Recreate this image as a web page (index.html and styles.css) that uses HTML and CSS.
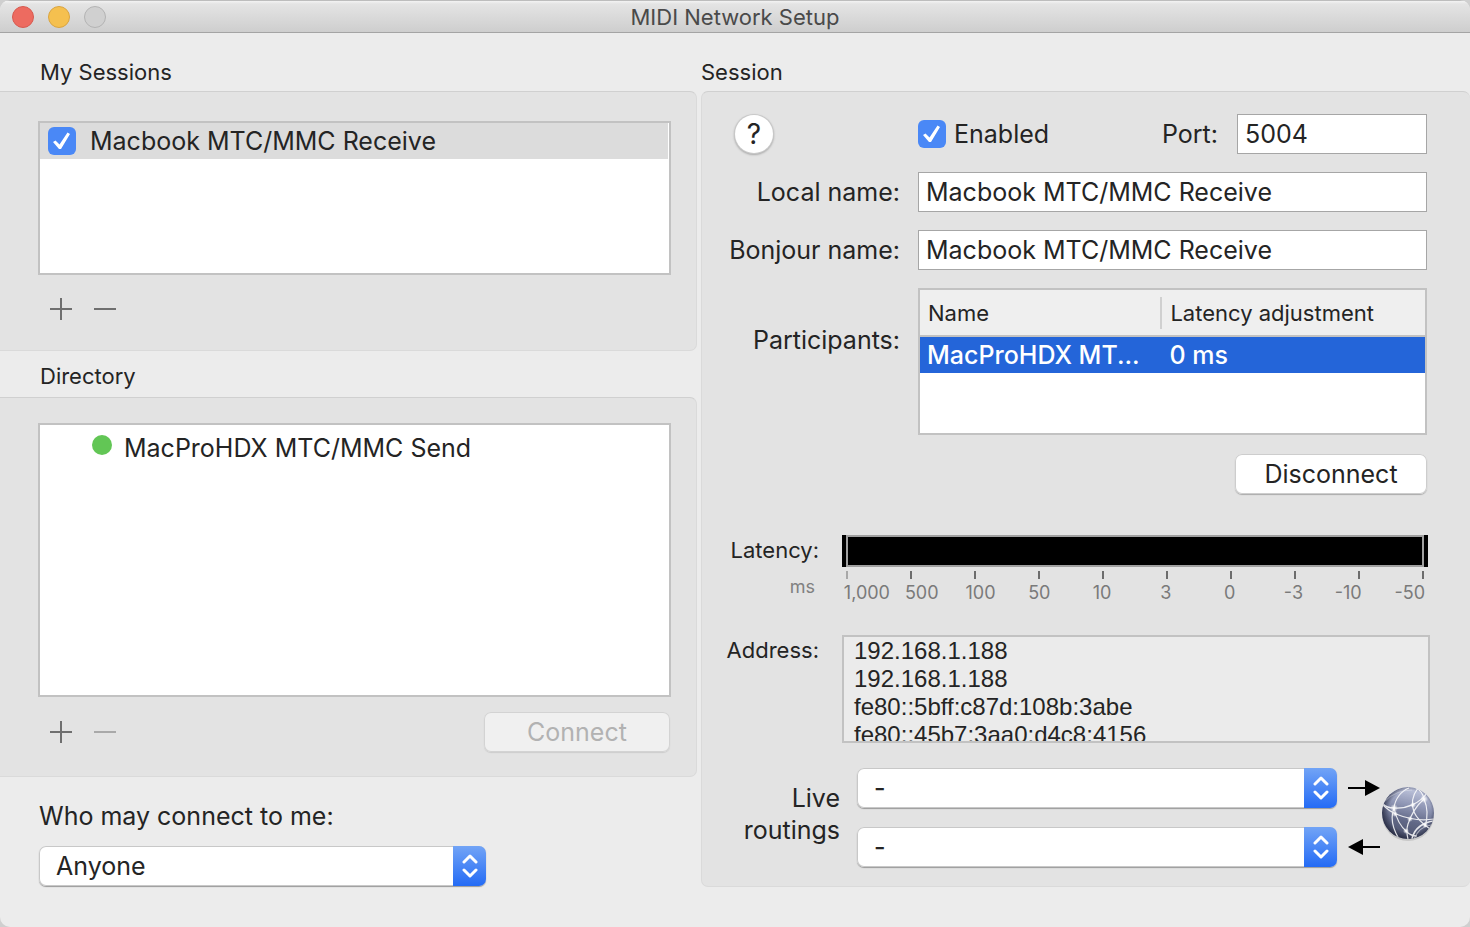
FILE: index.html
```html
<!DOCTYPE html>
<html lang="en">
<head>
<meta charset="utf-8">
<title>MIDI Network Setup</title>
<link rel="stylesheet" href="styles.css">
</head>
<body>
<div class="window">
  <header class="titlebar">
    <div class="lights">
      <button class="light light-close" aria-label="Close"></button>
      <button class="light light-minimize" aria-label="Minimize"></button>
      <button class="light light-zoom" aria-label="Zoom" disabled></button>
    </div>
    <h1 class="title">MIDI Network Setup</h1>
  </header>

  <main class="columns">
    <div class="side">
      <h2 class="heading">My Sessions</h2>
      <section class="box box-left box-sessions">
        <div class="list list-sessions">
          <label class="session-row">
            <input class="check" type="checkbox" checked>
            <span>Macbook MTC/MMC Receive</span>
          </label>
        </div>
        <div class="tools">
          <button class="tool" aria-label="Add session"><svg width="22" height="22" viewBox="0 0 22 22"><path d="M0 11H22M11 0V22" stroke="currentColor" stroke-width="2"/></svg></button>
          <button class="tool" aria-label="Remove session"><svg width="22" height="22" viewBox="0 0 22 22"><path d="M0 11H22" stroke="currentColor" stroke-width="2"/></svg></button>
        </div>
      </section>

      <h2 class="heading heading-directory">Directory</h2>
      <section class="box box-left box-directory">
        <div class="list list-directory">
          <div class="directory-row"><span class="dot"></span><span>MacProHDX MTC/MMC Send</span></div>
        </div>
        <div class="tools">
          <button class="tool" aria-label="Add contact"><svg width="22" height="22" viewBox="0 0 22 22"><path d="M0 11H22M11 0V22" stroke="currentColor" stroke-width="2"/></svg></button>
          <button class="tool" aria-label="Remove contact" disabled><svg width="22" height="22" viewBox="0 0 22 22"><path d="M0 11H22" stroke="currentColor" stroke-width="2"/></svg></button>
          <button class="push push-connect" disabled>Connect</button>
        </div>
      </section>

      <div class="access">
        <label for="who">Who may connect to me:</label>
        <div class="popup popup-who">
          <select id="who"><option>Anyone</option></select>
          <span class="stepper"><svg width="16" height="26" viewBox="0 0 16 26"><path d="M2 9L8 3L14 9M2 17L8 23L14 17"/></svg></span>
        </div>
      </div>
    </div>

    <div class="detail">
      <h2 class="heading heading-session">Session</h2>
      <section class="box box-session">
        <div class="form">
          <button class="help" aria-label="Help">?</button>
          <div class="enable-row">
            <label class="enable"><input class="check" type="checkbox" checked><span>Enabled</span></label>
            <label for="port">Port:</label>
            <input class="field field-port" id="port" type="text" value="5004">
          </div>
          <label class="form-label" for="local">Local name:</label>
          <input class="field" id="local" type="text" value="Macbook MTC/MMC Receive">
          <label class="form-label" for="bonjour">Bonjour name:</label>
          <input class="field" id="bonjour" type="text" value="Macbook MTC/MMC Receive">
          <span class="form-label label-participants" id="participants">Participants:</span>
          <div class="participants">
            <table aria-labelledby="participants">
              <thead><tr><th class="col-name"><span>Name</span></th><th>Latency adjustment</th></tr></thead>
              <tbody><tr><td>MacProHDX MT...</td><td>0 ms</td></tr></tbody>
            </table>
          </div>
        </div>
        <button class="push push-disconnect">Disconnect</button>

        <div class="status">
          <div class="status-label">Latency:<span class="unit">ms</span></div>
          <div class="latency">
            <div class="meter"></div>
            <div class="ticks"><i></i><i></i><i></i><i></i><i></i><i></i><i></i><i></i><i></i><i></i></div>
            <div class="scale"><span>1,000</span><span>500</span><span>100</span><span>50</span><span>10</span><span>3</span><span>0</span><span>-3</span><span>-10</span><span>-50</span></div>
          </div>
          <label class="status-label" for="address">Address:</label>
          <textarea class="address" id="address" readonly>192.168.1.188
192.168.1.188
fe80::5bff:c87d:108b:3abe
fe80::45b7:3aa0:d4c8:4156</textarea>
        </div>

        <div class="routing">
          <div class="routing-label">Live<br>routings</div>
          <div class="routing-popups">
            <div class="popup">
              <select aria-label="Live routing to network"><option>-</option></select>
              <span class="stepper"><svg width="16" height="26" viewBox="0 0 16 26"><path d="M2 9L8 3L14 9M2 17L8 23L14 17"/></svg></span>
            </div>
            <div class="popup">
              <select aria-label="Live routing from network"><option>-</option></select>
              <span class="stepper"><svg width="16" height="26" viewBox="0 0 16 26"><path d="M2 9L8 3L14 9M2 17L8 23L14 17"/></svg></span>
            </div>
          </div>
          <div class="arrows">
            <svg width="32" height="16" viewBox="0 0 32 16"><path d="M0 8H18" stroke="#000" stroke-width="2"/><path d="M17 0L32 8L17 16Z"/></svg>
            <svg width="32" height="16" viewBox="0 0 32 16"><path d="M14 8H32" stroke="#000" stroke-width="2"/><path d="M15 0L0 8L15 16Z"/></svg>
          </div>
          <svg class="globe" width="54" height="56" viewBox="0 0 54 56">
            <defs>
              <linearGradient id="sphere" x1="0.6" y1="0" x2="0.4" y2="1">
                <stop offset="0" stop-color="#c3c9e0"/><stop offset="0.35" stop-color="#8f96b4"/><stop offset="0.65" stop-color="#626987"/><stop offset="1" stop-color="#4c526c"/>
              </linearGradient>
              <radialGradient id="rim" cx="0.54" cy="0.47" r="0.54">
                <stop offset="0.75" stop-color="#20243a" stop-opacity="0"/><stop offset="1" stop-color="#20243a" stop-opacity="0.75"/>
              </radialGradient>
              <radialGradient id="spark"><stop offset="0" stop-color="#fff"/><stop offset="0.35" stop-color="#fff" stop-opacity="0.7"/><stop offset="1" stop-color="#fff" stop-opacity="0"/></radialGradient>
              <clipPath id="disc"><circle cx="27" cy="27" r="26"/></clipPath>
            </defs>
            <circle cx="27" cy="29" r="26" fill="#000" opacity="0.12"/>
            <circle cx="27" cy="27" r="26" fill="url(#sphere)"/>
            <g clip-path="url(#disc)">
              <circle cx="27" cy="27" r="26" fill="url(#rim)"/>
              <g fill="none" stroke="#fff" stroke-width="1.2" opacity="0.85">
                <path d="M2 18C5 21 9 22 13 22C26 23 39 17 46 7"/>
                <path d="M28 2C20 5 14 13 13 22C9 32 12 43 18 53"/>
                <path d="M2 19C7 24 10 26 15 28C27 33 40 35 53 33"/>
                <path d="M35 2C39 4 42 8 43 13C47 22 47 31 44 41"/>
                <path d="M37 2C31 10 30 18 33 26C36 33 42 38 49 43"/>
                <path d="M43 13C35 20 30 29 27 38C25 44 26 49 27 53"/>
                <path d="M13 22C15 32 19 40 26 46C29 49 33 50 36 50"/>
                <path d="M53 35C43 36 33 42 31 53" stroke-width="1.6"/>
                <path d="M50 39C42 40 36 46 33 53" opacity="0.6"/>
                <path d="M4 15C11 8 20 4 31 4" opacity="0.35"/>
              </g>
              <g fill="url(#spark)"><circle cx="13" cy="22" r="4"/><circle cx="14" cy="28" r="3"/><circle cx="43" cy="13" r="4"/><circle cx="32" cy="19" r="3"/><circle cx="29" cy="33" r="3"/><circle cx="25" cy="45" r="3"/><circle cx="44" cy="39" r="3"/></g>
            </g>
          </svg>
        </div>
      </section>
    </div>
  </main>
</div>
</body>
</html>
```
FILE: styles.css
```css
:root {
  --large: 25px;
  --small: 22px;
  --ink: #242424;
  --edge: #c2c2c2;
}

* {
  box-sizing: border-box;
}

html {
  background: #cfcfcf;
}

body {
  margin: 0;
  font-family: Inter, "Liberation Sans", sans-serif;
  font-size: var(--large);
  line-height: 32px;
  color: var(--ink);
}

button,
input,
select,
textarea {
  margin: 0;
  padding: 0;
  border: 0;
  font: inherit;
  color: inherit;
}

.window {
  min-height: 100vh;
  background: #ececec;
  border-radius: 10px;
  overflow: hidden;
}

.titlebar {
  display: grid;
  grid-template-columns: 1fr auto 1fr;
  align-items: center;
  height: 33px;
  padding: 0 12px;
  background: linear-gradient(#f3f3f3, #e4e4e4 3px, #cecece);
  border-top: 1px solid #bdbdbd;
  border-bottom: 1px solid #a4a4a4;
}

.lights {
  display: flex;
  gap: 14px;
}

.light {
  width: 22px;
  height: 22px;
  border: 1px solid;
  border-radius: 50%;
}

.light-close {
  background: #ed6b60;
  border-color: #d65a50;
}

.light-minimize {
  background: #f5c04f;
  border-color: #d9a441;
}

.light-zoom {
  background: #d0d0d0;
  border-color: #b3b3b3;
}

.title {
  margin: 0;
  font-size: var(--small);
  font-weight: 400;
  line-height: 28px;
  color: #4a4a4a;
}

.columns {
  display: grid;
  grid-template-columns: minmax(0, 697fr) minmax(0, 769fr);
  gap: 4px;
}

.heading {
  margin: 0;
  padding: 25px 40px 5px;
  font-size: var(--small);
  font-weight: 400;
  line-height: 28px;
}

.heading-directory {
  padding-top: 11px;
  padding-bottom: 7px;
}

.heading-session {
  padding-left: 0;
}

.box {
  background: #e3e3e3;
  border: 1px solid #dadada;
  border-top-color: #d0d0d0;
  border-radius: 7px;
}

.box-left {
  padding-left: 38px;
  padding-right: 25px;
  border-left: 0;
  border-top-left-radius: 0;
  border-bottom-left-radius: 0;
}

.box-sessions {
  padding-top: 29px;
  padding-bottom: 21px;
}

.box-directory {
  padding-top: 25px;
  padding-bottom: 24px;
}

.list {
  background: #fff;
  border: 2px solid var(--edge);
}

.list-sessions {
  min-height: 154px;
}

.list-directory {
  min-height: 274px;
}

.session-row {
  display: flex;
  align-items: center;
  gap: 14px;
  min-height: 36px;
  margin-right: 1px;
  padding-left: 8px;
  background: #dcdcdc;
}

.directory-row {
  display: flex;
  align-items: center;
  gap: 12px;
  padding: 7px 0 0 52px;
}

.dot {
  width: 20px;
  height: 20px;
  margin-bottom: 6px;
  border-radius: 50%;
  background: #62c655;
}

.check {
  appearance: none;
  flex: none;
  width: 28px;
  height: 28px;
  border-radius: 6px;
  background: #4a88f6;
  display: grid;
  place-items: center;
}

.check:checked::before {
  content: "";
  width: 18px;
  height: 18px;
  background: #fff;
  clip-path: path("M0 10L2.5 8.5L6.5 12.5L14.5 0.5L17 2L8 17L6 17Z");
}

.tools {
  display: flex;
  align-items: center;
  gap: 22px;
  min-height: 40px;
  margin-top: 14px;
  padding-left: 12px;
}

.box-directory .tools {
  margin-top: 15px;
}

.tool {
  display: grid;
  background: none;
  color: #6f6f6f;
}

.tool:disabled {
  color: #a9a9a9;
}

.push {
  height: 40px;
  border-radius: 7px;
  background: #fff;
  box-shadow: inset 0 0 0 1px #cdcdcd, 0 1px 1px #aaa;
}

.push-connect {
  width: 186px;
  margin-left: auto;
  margin-right: 1px;
  background: #f0f0f0;
  color: #b2b2b2;
  box-shadow: inset 0 0 0 1px #d3d3d3, 0 1px 1px #ccc;
}

.push-disconnect {
  display: block;
  width: 192px;
  margin: 19px 43px 0 auto;
}

.access {
  display: grid;
  gap: 14px;
  padding: 23px 0 40px 39px;
}

.popup {
  position: relative;
}

.popup-who {
  width: 447px;
}

.popup select {
  display: block;
  appearance: none;
  width: 100%;
  height: 40px;
  padding: 0 40px 0 17px;
  border-radius: 7px;
  background: #fff;
  box-shadow: inset 0 0 0 1px #c8c8c8, 0 1px 1px #999;
}

.stepper {
  position: absolute;
  top: 0;
  right: 0;
  bottom: 0;
  width: 33px;
  display: grid;
  place-items: center;
  border-radius: 0 7px 7px 0;
  background: linear-gradient(#72a4f6, #246bf5);
  pointer-events: none;
}

.stepper path {
  fill: none;
  stroke: #fff;
  stroke-width: 3px;
  stroke-linecap: round;
  stroke-linejoin: round;
}

.box-session {
  padding-top: 22px;
  padding-bottom: 19px;
  border-right: 0;
}

.form {
  display: grid;
  grid-template-columns: 174px minmax(0, 1fr);
  gap: 18px;
  align-items: center;
  padding: 0 43px 0 24px;
}

.form-label {
  text-align: right;
  white-space: nowrap;
}

.label-participants {
  align-self: start;
  padding-top: 36px;
}

.help {
  width: 38px;
  height: 38px;
  margin-left: 9px;
  border-radius: 50%;
  background: #fff;
  box-shadow: 0 0 0 1px #c9c9c9, 0 1px 2px 1px #aaa;
  font-size: 28px;
}

.enable-row {
  display: flex;
  align-items: center;
}

.enable {
  display: flex;
  align-items: center;
  gap: 8px;
  margin-right: auto;
}

.field {
  width: 100%;
  height: 40px;
  padding: 0 7px;
  border: 1px solid #a6a6a6;
  background: #fff;
}

.field-port {
  width: 190px;
  margin-left: 19px;
}

.participants {
  min-height: 147px;
  border: 2px solid var(--edge);
  background: #fff;
}

.participants table {
  width: 100%;
  table-layout: fixed;
  border-collapse: collapse;
}

.participants th {
  height: 46px;
  padding: 0 8px;
  border-bottom: 2px solid var(--edge);
  background: #efefef;
  font-size: var(--small);
  font-weight: 400;
  text-align: left;
  white-space: nowrap;
}

.participants .col-name {
  width: 48%;
  padding-right: 0;
}

.col-name span {
  display: block;
  border-right: 2px solid #d0d0d0;
}

.participants td {
  height: 36px;
  padding: 0 7px;
  background: #2465d9;
  color: #fff;
  font-weight: 500;
  line-height: 36px;
  white-space: nowrap;
}

.status {
  display: grid;
  grid-template-columns: 93px minmax(0, 1fr);
  gap: 31px 23px;
  padding: 41px 40px 0 24px;
}

.status-label {
  display: flex;
  flex-direction: column;
  padding-top: 1px;
  font-size: var(--small);
  line-height: 28px;
  text-align: right;
}

.unit {
  padding: 9px 4px 0 0;
  font-size: 18px;
  color: #808080;
}

.latency {
  padding-right: 2px;
}

.meter {
  height: 32px;
  border: 0 solid #000;
  border-width: 0 4px;
  background: #000;
  box-shadow: inset 0 0 0 2px #a0a0a0;
}

.ticks {
  display: flex;
  justify-content: space-between;
  padding: 4px 4px 0;
}

.ticks i {
  width: 2px;
  height: 8px;
  background: #6c6c6c;
}

.ticks i:first-child {
  background: #a8a8a8;
}

.scale {
  display: grid;
  grid-template-columns: 48fr 62fr 56fr 62fr 64fr 64fr 64fr 64fr 46fr 54fr;
  padding: 2px 3px 0 1px;
  font-size: 18px;
  line-height: 24px;
  text-align: center;
  color: #7a7a7a;
}

.scale span:last-child {
  text-align: right;
}

.latency {
  margin-bottom: -1px;
}

.address {
  display: block;
  width: 100%;
  height: 108px;
  padding: 0 10px;
  border: 2px solid var(--edge);
  background: #ebebeb;
  font-family: "Liberation Sans", Arial, sans-serif;
  font-size: 24px;
  line-height: 28px;
  resize: none;
  overflow: hidden;
}

.routing {
  display: flex;
  align-items: center;
  padding: 25px 35px 0 24px;
}

.routing-label {
  width: 114px;
  padding-bottom: 8px;
  text-align: right;
}

.routing-popups {
  flex: 1;
  display: grid;
  gap: 19px;
  margin: 0 11px 0 17px;
}

.routing-popups select {
  font-weight: 500;
}

.arrows {
  display: grid;
  gap: 43px;
}

.globe {
  margin: 0 0 8px 1px;
}
```
